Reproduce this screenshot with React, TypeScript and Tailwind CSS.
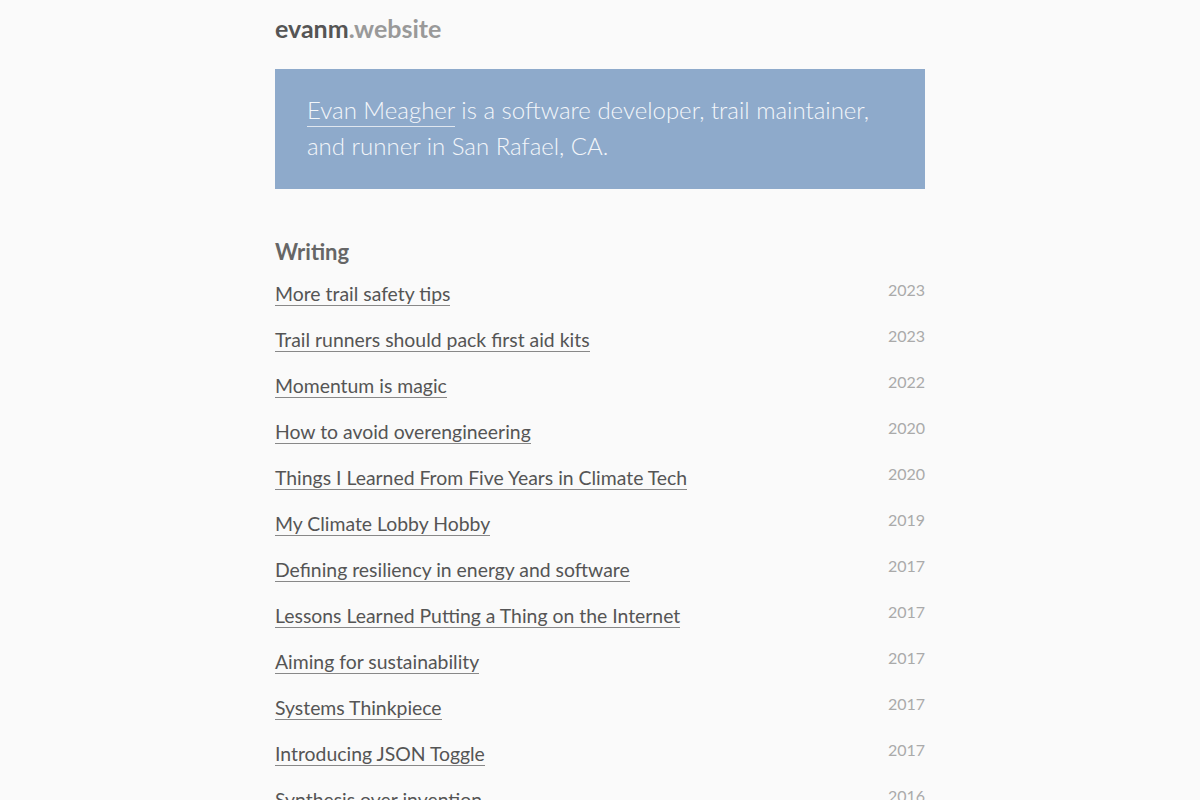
const posts: [string, string][] = [
  ["More trail safety tips", "2023"],
  ["Trail runners should pack first aid kits", "2023"],
  ["Momentum is magic", "2022"],
  ["How to avoid overengineering", "2020"],
  ["Things I Learned From Five Years in Climate Tech", "2020"],
  ["My Climate Lobby Hobby", "2019"],
  ["Defining resiliency in energy and software", "2017"],
  ["Lessons Learned Putting a Thing on the Internet", "2017"],
  ["Aiming for sustainability", "2017"],
  ["Systems Thinkpiece", "2017"],
  ["Introducing JSON Toggle", "2017"],
  ["Synthesis over invention", "2016"],
  ["On reading", "2016"],
];

export default function App() {
  return (
    <div className="min-h-screen bg-[#fafafa] font-['Lato','Liberation_Sans',sans-serif]">
      <div className="w-[650px] mx-auto pt-3">
        <h1 className="text-[25px] leading-8 font-bold text-[#555]">
          evanm<span className="text-[#999]">.website</span>
        </h1>

        <div className="mt-[25px] bg-[#8eaacb] pl-8 pr-6 pt-[23px] pb-[25px]">
          <p className="text-[24px] leading-9 font-light text-[#f3f6fa]">
            <a href="#" className="pb-[2px] border-b border-[#dfe6ef]">Evan Meagher</a> is a software developer, trail maintainer,
            and runner in San Rafael, CA.
          </p>
        </div>

        <h2 className="mt-[49px] text-[22px] leading-7 font-bold text-[#666]">Writing</h2>

        <ul className="mt-[14px]">
          {posts.map(([title, year]) => (
            <li key={title} className="h-[46px] flex justify-between items-start">
              <a href="#" className="mt-[3px] block text-[19.4px] leading-[22px] text-[#555] border-b border-[#888]">
                {title}
              </a>
              <span className="text-[16px] leading-5 text-[#aaa]">{year}</span>
            </li>
          ))}
        </ul>
      </div>
    </div>
  );
}
